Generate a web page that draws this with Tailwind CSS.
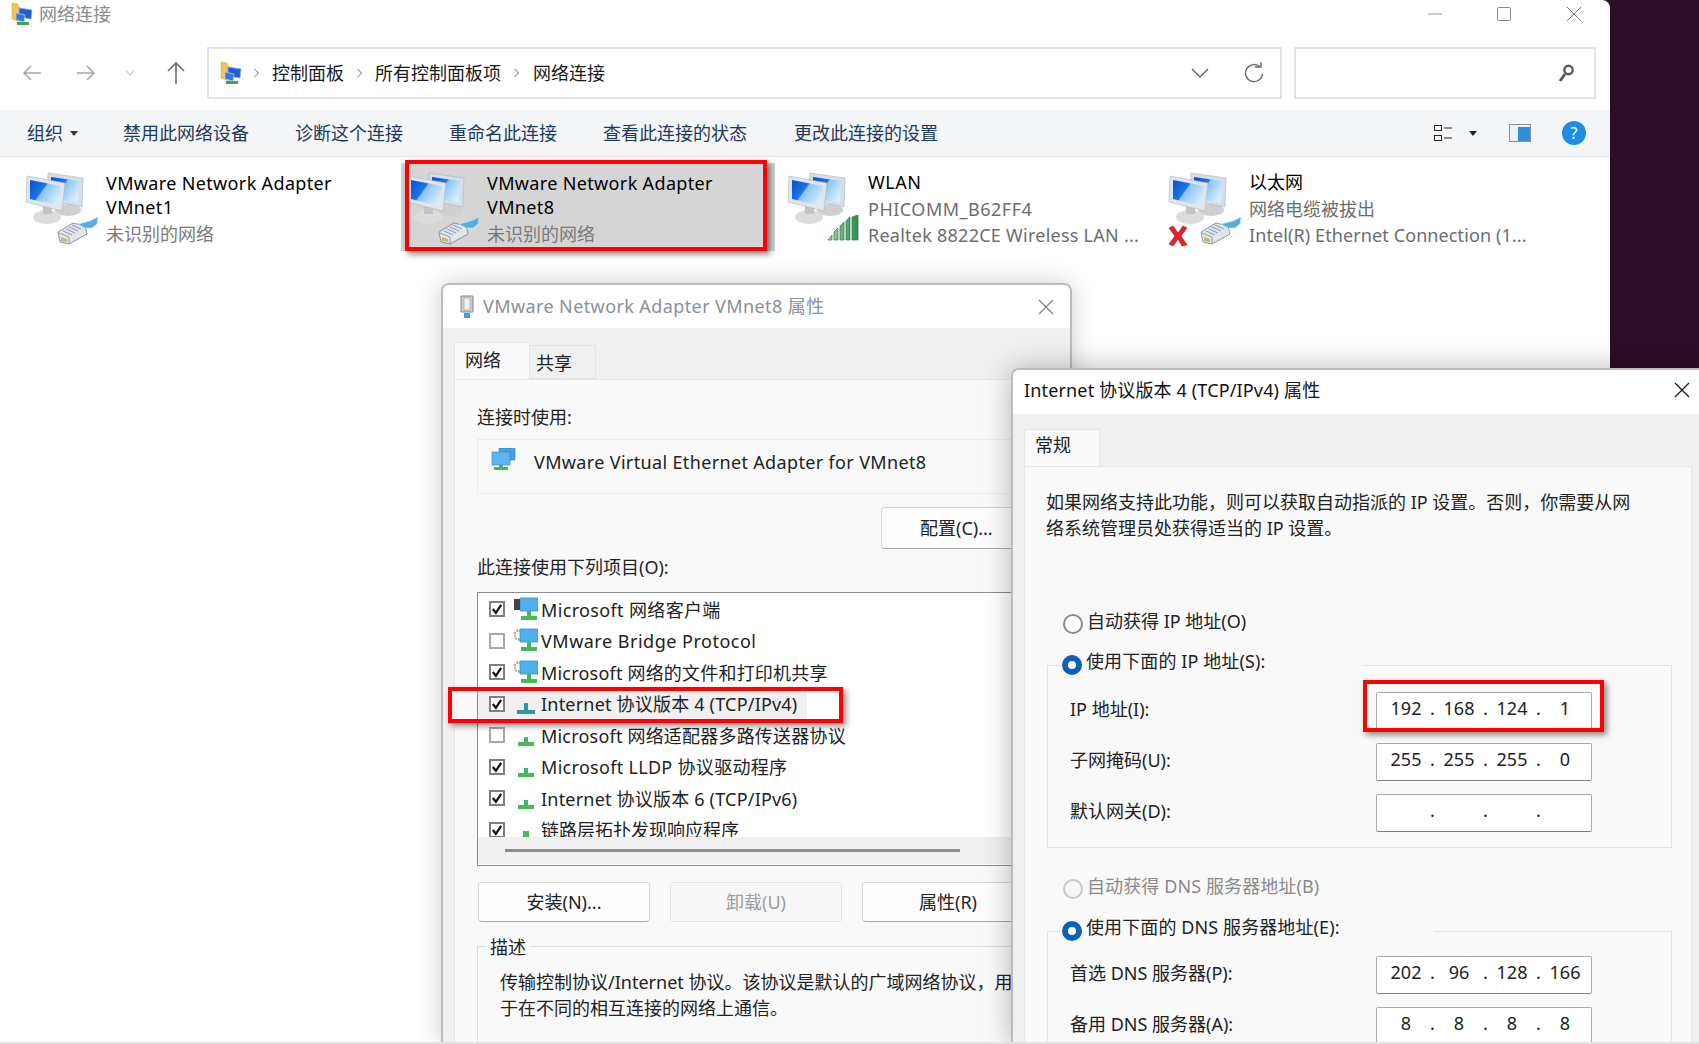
<!DOCTYPE html>
<html lang="zh-CN">

<head>
    <meta charset="UTF-8">
    <title>网络连接</title>
    <script src="https://cdn.jsdelivr.net/npm/@tailwindcss/browser@4"></script>
</head>

<body class="bg-[#2d0c26]">

    <!-- shared icons -->
    <svg width="0" height="0" class="absolute">
        <defs>
            <linearGradient id="screen" x1="0" y1="0" x2="1" y2="0.6">
                <stop offset="0" stop-color="#0a4fd0" />
                <stop offset="0.45" stop-color="#1a76e8" />
                <stop offset="0.5" stop-color="#8cc4f4" />
                <stop offset="1" stop-color="#d4ecfb" />
            </linearGradient>
            <linearGradient id="bars" x1="0" y1="0" x2="1" y2="0">
                <stop offset="0" stop-color="#a9d4b4" />
                <stop offset="1" stop-color="#2f8a4e" />
            </linearGradient>
            <symbol id="pc" viewBox="15 12 70 73">
                <ellipse cx="58" cy="50" rx="13" ry="6" fill="#cfcfcf" />
                <path d="M38 13 L73 18 L72 47 L37 40 Z" fill="#d5dde6" stroke="#a9b3bd" stroke-width="0.6" />
                <path d="M41 17 L69 21 L68 43 L41 38 Z" fill="url(#screen)" />
                <ellipse cx="37" cy="57" rx="14" ry="7" fill="#dcdcdc" />
                <path d="M33 46 L42 48 L42 54 L33 54 Z" fill="#c2c2c2" />
                <path d="M17 16 L55 23 L52 51 L16 42 Z" fill="#e1e6ec" stroke="#a9b3bd" stroke-width="0.6" />
                <path d="M20 20 L51 26 L49 46 L20 39 Z" fill="url(#screen)" />
            </symbol>
            <symbol id="plug" viewBox="0 0 44 28">
                <path d="M2 15 L17 6 L29 9 L31 17 L13 27 L4 25 Z" fill="#dfe6ec" stroke="#7f8c99" stroke-width="0.9" />
                <path d="M3 16 L13 20 L13 27" fill="none" stroke="#7f8c99" stroke-width="0.8" />
                <path d="M7 14 L16 18 M10 12 L19 16 M13 10 L22 14 M16 8 L25 12" stroke="#97a6b4" stroke-width="1.1" fill="none" />
                <path d="M5 20 L11 22 L11 25 L5 24 Z" fill="#c9b765" />
                <path d="M22 7 L34 4 L42 0 L41 7 L36 11 L29 11 Z" fill="#55ade4" stroke="#cfe6f5" stroke-width="0.6" />
            </symbol>
            <symbol id="folder" viewBox="0 0 22 24">
                <path d="M1 1 L7 2 L8 5 L9 5 L9 20 L1 17 Z" fill="#ecc65c" stroke="#c9a23a" stroke-width="0.5" />
                <path d="M8 6 L21 8 L20 17 L8 15 Z" fill="#1d5fd6" stroke="#8ea6c4" stroke-width="0.8" />
                <path d="M5 11 L14 13 L13 20 L5 18 Z" fill="#2f78e0" stroke="#b8c4d0" stroke-width="0.8" />
                <path d="M6 20 L18 20 L18 23 L6 23 Z" fill="#3aa55a" />
            </symbol>
            <symbol id="net" viewBox="0 0 24 24">
                <path d="M10 14 h4 v5 h6 v4 h-16 v-4 h6 z" fill="#44b95c" />
            </symbol>
            <symbol id="net-teal" viewBox="0 0 24 24">
                <path d="M10 12 h4 v7 h7 v4 h-18 v-4 h7 z" fill="#2f9a96" />
            </symbol>
            <symbol id="client" viewBox="0 0 24 24">
                <path d="M6 1 H24 V14 H6 Z" fill="#4fb0ef" stroke="#3b8fc8" stroke-width="0.8" />
                <path d="M13 14 h4 v5 h6 v4 h-16 v-4 h6 z" fill="#44b95c" />
            </symbol>
            <symbol id="gear" viewBox="0 0 24 24">
                <circle cx="5" cy="7" r="4.5" fill="none" stroke="#a8a8a8" stroke-width="2.4" stroke-dasharray="2 1" />
            </symbol>
            <symbol id="check" viewBox="0 0 16 16">
                <path d="M2.5 8 L6.5 13 L13.5 2.5" fill="none" stroke="#111" stroke-width="3" />
            </symbol>
        </defs>
    </svg>

    <div class="relative w-[1699px] h-[1044px] overflow-hidden font-['Noto_Sans','Noto_Sans_CJK_SC',sans-serif]">

        <!-- explorer window -->
        <div class="flex flex-col w-[1610px] h-[1044px] bg-white rounded-tr-lg">
            <div class="flex items-center justify-between h-[28px] mb-[19px] pl-[11px]">
                <div class="flex items-center gap-[6px] text-[18px] text-[#8b8b8b]">
                    <svg width="22" height="24"><use href="#folder" /></svg>
                    <span>网络连接</span>
                </div>
                <div class="flex items-center gap-[55px] pr-[28px]">
                    <svg width="14" height="14" viewBox="0 0 14 14"><path d="M0 7 H14" stroke="#9a9a9a" /></svg>
                    <svg width="14" height="14" viewBox="0 0 14 14"><rect x="0.5" y="0.5" width="13" height="13" rx="1.5" fill="none" stroke="#8a8a8a" /></svg>
                    <svg width="16" height="16" viewBox="0 0 16 16"><path d="M1 1 L15 15 M15 1 L1 15" stroke="#7a7a7a" /></svg>
                </div>
            </div>

            <div class="flex items-center h-[52px] mb-[11px]">
                <div class="flex items-center w-[207px] pl-[22px]">
                    <svg width="20" height="20" viewBox="0 0 20 20" fill="none" stroke="#a6a6a6" stroke-width="1.5"><path d="M19 10 H2 M9 3 L2 10 L9 17" /></svg>
                    <svg class="ml-[34px]" width="20" height="20" viewBox="0 0 20 20" fill="none" stroke="#a6a6a6" stroke-width="1.5"><path d="M1 10 H18 M11 3 L18 10 L11 17" /></svg>
                    <svg class="ml-[29px]" width="10" height="8" viewBox="0 0 10 8" fill="none" stroke="#b5b5b5"><path d="M1 1.5 L5 6 L9 1.5" /></svg>
                    <svg class="ml-[31px]" width="20" height="24" viewBox="0 0 20 24" fill="none" stroke="#6e6e6e" stroke-width="1.6"><path d="M10 23 V2 M2 10 L10 2 L18 10" /></svg>
                </div>
                <div class="flex items-center w-[1075px] h-full pl-[11px] pr-[16px] border-2 border-[#e3e3e3] text-[18px] text-[#1a1a1a]">
                    <svg width="22" height="24"><use href="#folder" /></svg>
                    <svg class="ml-[11px]" width="7" height="10" viewBox="0 0 7 10" fill="none" stroke="#666"><path d="M1.5 1 L5.5 5 L1.5 9" /></svg>
                    <span class="ml-[12px]">控制面板</span>
                    <svg class="ml-[12px]" width="7" height="10" viewBox="0 0 7 10" fill="none" stroke="#666"><path d="M1.5 1 L5.5 5 L1.5 9" /></svg>
                    <span class="ml-[12px]">所有控制面板项</span>
                    <svg class="ml-[12px]" width="7" height="10" viewBox="0 0 7 10" fill="none" stroke="#666"><path d="M1.5 1 L5.5 5 L1.5 9" /></svg>
                    <span class="ml-[13px]">网络连接</span>
                    <svg class="ml-auto" width="18" height="10" viewBox="0 0 18 10" fill="none" stroke="#555" stroke-width="1.2"><path d="M1 1 L9 9 L17 1" /></svg>
                    <svg class="ml-[35px]" width="20" height="22" viewBox="0 0 20 22" fill="none" stroke="#6e6e6e" stroke-width="1.4"><path d="M16 5 A8.5 8.5 0 1 0 18.5 12" /><path d="M11 5 H17 V0" /></svg>
                </div>
                <div class="flex items-center justify-end w-[302px] h-full ml-[12px] pr-[19px] border-2 border-[#e3e3e3]">
                    <svg width="18" height="20" viewBox="0 0 18 20" fill="none" stroke="#5a5a5a"><circle cx="11.5" cy="7" r="4.2" stroke-width="2.4" /><path d="M8 11 L3 18" stroke-width="3" /></svg>
                </div>
            </div>

            <div class="flex items-center h-[47px] pl-[27px] pr-[24px] bg-[#f3f5f7] border-b border-[#e4e6e8] text-[18px] text-[#1e395b]">
                <span>组织</span>
                <svg class="ml-[7px] mr-[45px]" width="8" height="5" viewBox="0 0 8 5"><path d="M0 0 H8 L4 5 Z" fill="#333" /></svg>
                <span class="mr-[46px]">禁用此网络设备</span>
                <span class="mr-[46px]">诊断这个连接</span>
                <span class="mr-[46px]">重命名此连接</span>
                <span class="mr-[47px]">查看此连接的状态</span>
                <span>更改此连接的设置</span>
                <svg class="ml-auto" width="20" height="20" viewBox="0 0 20 20" fill="none" stroke="#222"><rect x="1.5" y="2.5" width="7" height="5" /><rect x="1.5" y="12.5" width="7" height="5" /><path d="M11 5 H19 M11 15 H19" /></svg>
                <svg class="ml-[16px]" width="8" height="5" viewBox="0 0 8 5"><path d="M0 0 H8 L4 5 Z" fill="#223" /></svg>
                <svg class="ml-[32px]" width="22" height="18" viewBox="0 0 22 18"><rect x="0.5" y="0.5" width="21" height="17" fill="#eef2f6" stroke="#8a8f96" /><rect x="9" y="3" width="12" height="14" fill="#2f8fd8" /></svg>
                <div class="ml-[31px] flex items-center justify-center w-[24px] h-[24px] rounded-full bg-[#1a8fe3] text-white text-[16px]">?</div>
            </div>

            <div class="grid grid-cols-[repeat(4,381px)] mt-[6px] pl-[20px] text-[18px]">
                <div class="relative flex w-[374px] h-[88px] pl-[5px]">
                    <div class="relative w-[81px] shrink-0">
                        <svg class="absolute left-0 top-[9px]" width="70" height="73"><use href="#pc" /></svg>
                        <svg class="absolute left-[31px] top-[54px]" width="44" height="28"><use href="#plug" /></svg>
                    </div>
                    <div class="pt-[8px] leading-[24px] text-black">
                        <div class="tracking-[0.35px]">VMware Network Adapter</div>
                        <div class="tracking-[0.35px]">VMnet1</div>
                        <div class="mt-[3px] text-[#7a7a7a]">未识别的网络</div>
                    </div>
                </div>
                <div class="relative flex w-[374px] h-[88px] pl-[5px] bg-[#d5d5d5]">
                    <div class="relative w-[81px] shrink-0">
                        <svg class="absolute left-0 top-[9px]" width="70" height="73"><use href="#pc" /></svg>
                        <svg class="absolute left-[31px] top-[54px]" width="44" height="28"><use href="#plug" /></svg>
                    </div>
                    <div class="pt-[8px] leading-[24px] text-black">
                        <div class="tracking-[0.35px]">VMware Network Adapter</div>
                        <div class="tracking-[0.35px]">VMnet8</div>
                        <div class="mt-[3px] text-[#7a7a7a]">未识别的网络</div>
                    </div>
                    <div class="absolute left-[4px] top-[-3px] w-[362px] h-[91px] border-4 border-[#f00] shadow-[3px_3px_6px_rgba(0,0,0,0.5)]"></div>
                </div>
                <div class="relative flex w-[374px] h-[88px] pl-[5px]">
                    <div class="relative w-[81px] shrink-0">
                        <svg class="absolute left-0 top-[9px]" width="70" height="73"><use href="#pc" /></svg>
                        <svg class="absolute left-[40px] top-[52px]" width="32" height="26" viewBox="0 0 32 26"><path d="M1 25 L5 20 V25 Z M7 25 V17 L11 13 V25 Z M13 25 V11 L17 7 V25 Z M19 25 V6 L23 2 V25 Z M25 25 V2 L31 0 V25 Z" fill="url(#bars)" stroke="#2f7a46" stroke-width="0.7" /></svg>
                    </div>
                    <div class="pt-[6px] leading-[26px] text-black">
                        <div class="mb-[1px] tracking-[0.5px]">WLAN</div>
                        <div class="text-[#6d6d6d] tracking-[0.5px]">PHICOMM_B62FF4</div>
                        <div class="text-[#6d6d6d] tracking-[0.25px]">Realtek 8822CE Wireless LAN ...</div>
                    </div>
                </div>
                <div class="relative flex w-[374px] h-[88px] pl-[5px]">
                    <div class="relative w-[81px] shrink-0">
                        <svg class="absolute left-0 top-[9px]" width="70" height="73"><use href="#pc" /></svg>
                        <svg class="absolute left-[31px] top-[54px]" width="44" height="28"><use href="#plug" /></svg>
                        <svg class="absolute left-[-1px] top-[62px]" width="22" height="22" viewBox="0 0 22 22"><path d="M2 3 L6 1 L11 8 L16 1 L20 3 L14 11 L20 20 L15 21 L11 14 L6 21 L2 19 L8 11 Z" fill="#e0242a" stroke="#a81418" stroke-width="0.6" /></svg>
                    </div>
                    <div class="pt-[6px] leading-[26px] text-black">
                        <div class="mb-[1px]">以太网</div>
                        <div class="text-[#6d6d6d]">网络电缆被拔出</div>
                        <div class="text-[#6d6d6d] tracking-[0.1px]">Intel(R) Ethernet Connection (1...</div>
                    </div>
                </div>
            </div>
        </div>

        <!-- adapter properties dialog -->
        <div class="absolute left-[441px] top-[283px] flex flex-col w-[631px] h-[761px] rounded-t-lg border-2 border-b-0 border-[#bcbcbc] bg-[#f0f0f0] shadow-[0_0_24px_rgba(0,0,0,0.2)] overflow-hidden">
            <div class="flex items-center h-[43px] shrink-0 pl-[16px] pr-[16px] bg-white text-[18px] text-[#8a9098]">
                <svg width="16" height="24" viewBox="0 0 16 24"><path d="M2 1 H14 V17 H2 Z" fill="#c9cdd2" stroke="#7d858e" /><path d="M5 3 H11 V15 H5 Z" fill="#eef0f2" stroke="#9aa2aa" stroke-width="0.6" /><path d="M5 18 H11 V23 H5 Z" fill="#3aa0d8" /></svg>
                <span class="ml-[8px] tracking-[0.4px]">VMware Network Adapter VMnet8 属性</span>
                <svg class="ml-auto" width="16" height="16" viewBox="0 0 16 16"><path d="M1 1 L15 15 M15 1 L1 15" stroke="#808080" stroke-width="1.2" /></svg>
            </div>
            <div class="flex items-end h-[51px] shrink-0 pl-[11px] text-[18px] text-[#222]">
                <div class="flex items-start w-[76px] h-[37px] pt-[4px] pl-[10px] bg-[#f9f9f9] border border-b-0 border-[#e6e6e6]">网络</div>
                <div class="flex items-center w-[66px] h-[34px] pt-[2px] pl-[6px] bg-[#f0f0f0] border border-l-0 border-[#e2e2e2]">共享</div>
            </div>
            <div class="flex-1 ml-[11px] w-[606px] pl-[22px] bg-[#f9f9f9] border-t border-l border-[#e6e6e6] text-[18px] text-[#222]">
                <div class="h-[24px] mt-[25px] leading-[24px]">连接时使用:</div>
                <div class="flex h-[55px] mt-[10px] pl-[13px] pt-[8px] border border-[#ececec]">
                    <svg width="25" height="24" viewBox="0 0 25 24"><rect x="8" y="0" width="16" height="12" fill="#4a9fe0" stroke="#2f7fc0" stroke-width="0.6" /><rect x="1" y="4" width="18" height="13" fill="#5bb5ef" stroke="#2f7fc0" stroke-width="0.6" /><path d="M8 17 h4 v2 h5 v3 h-14 v-3 h5 z" fill="#44b95c" /></svg>
                    <span class="ml-[18px] leading-[28px] tracking-[0.35px]">VMware Virtual Ethernet Adapter for VMnet8</span>
                </div>
                <div class="flex justify-start h-[42px] mt-[13px] ml-[404px]">
                    <div class="flex items-center w-[160px] pl-[38px] bg-[#fdfdfd] border border-[#d4d4d4] border-b-[#a8a8a8] rounded-[4px]">配置(C)...</div>
                </div>
                <div class="h-[24px] mt-[6px] leading-[24px]">此连接使用下列项目(O):</div>
                <div class="relative w-[570px] h-[274px] mt-[13px] bg-white border-[1.5px] border-[#8c8c8c]">
                    <div class="h-[244px] overflow-hidden">
                        <div class="flex items-center h-[31.5px] pl-[11px]">
                            <div class="w-[16px] h-[16px] mt-[1px] bg-white border-2 border-[#7f7f7f]"><svg width="12" height="12"><use href="#check" /></svg></div>
                            <svg class="ml-[9px]" width="24" height="24"><use href="#client" /><rect x="0" y="2" width="6" height="11" fill="#444" /></svg>
                            <span class="ml-[3px] pt-[3px] tracking-[0.35px]">Microsoft 网络客户端</span>
                        </div>
                        <div class="flex items-center h-[31.5px] pl-[11px]">
                            <div class="w-[16px] h-[16px] mt-[1px] bg-white border-2 border-[#a8a8a8]"></div>
                            <svg class="ml-[9px]" width="24" height="24"><use href="#gear" /><use href="#client" /></svg>
                            <span class="ml-[3px] pt-[3px] tracking-[0.5px]">VMware Bridge Protocol</span>
                        </div>
                        <div class="flex items-center h-[31.5px] pl-[11px]">
                            <div class="w-[16px] h-[16px] mt-[1px] bg-white border-2 border-[#7f7f7f]"><svg width="12" height="12"><use href="#check" /></svg></div>
                            <svg class="ml-[9px]" width="24" height="24"><use href="#gear" /><use href="#client" /></svg>
                            <span class="ml-[3px] pt-[3px] tracking-[0.2px]">Microsoft 网络的文件和打印机共享</span>
                        </div>
                        <div class="flex items-center h-[31.5px] pl-[11px] w-[329px] bg-[#f0f0f0]">
                            <div class="w-[16px] h-[16px] mt-[1px] bg-white border-2 border-[#7f7f7f]"><svg width="12" height="12"><use href="#check" /></svg></div>
                            <svg class="ml-[9px]" width="24" height="24"><use href="#net-teal" /></svg>
                            <span class="ml-[3px] pt-[3px] tracking-[0.2px]">Internet 协议版本 4 (TCP/IPv4)</span>
                        </div>
                        <div class="flex items-center h-[31.5px] pl-[11px]">
                            <div class="w-[16px] h-[16px] mt-[1px] bg-white border-2 border-[#a8a8a8]"></div>
                            <svg class="ml-[9px]" width="24" height="24"><use href="#net" /></svg>
                            <span class="ml-[3px] pt-[3px] tracking-[0.2px]">Microsoft 网络适配器多路传送器协议</span>
                        </div>
                        <div class="flex items-center h-[31.5px] pl-[11px]">
                            <div class="w-[16px] h-[16px] mt-[1px] bg-white border-2 border-[#7f7f7f]"><svg width="12" height="12"><use href="#check" /></svg></div>
                            <svg class="ml-[9px]" width="24" height="24"><use href="#net" /></svg>
                            <span class="ml-[3px] pt-[3px] tracking-[0.3px]">Microsoft LLDP 协议驱动程序</span>
                        </div>
                        <div class="flex items-center h-[31.5px] pl-[11px]">
                            <div class="w-[16px] h-[16px] mt-[1px] bg-white border-2 border-[#7f7f7f]"><svg width="12" height="12"><use href="#check" /></svg></div>
                            <svg class="ml-[9px]" width="24" height="24"><use href="#net" /></svg>
                            <span class="ml-[3px] pt-[3px] tracking-[0.2px]">Internet 协议版本 6 (TCP/IPv6)</span>
                        </div>
                        <div class="flex items-center h-[31.5px] pl-[11px]">
                            <div class="w-[16px] h-[16px] mt-[1px] bg-white border-2 border-[#7f7f7f]"><svg width="12" height="12"><use href="#check" /></svg></div>
                            <svg class="ml-[9px]" width="24" height="24" viewBox="0 0 24 24"><rect x="9" y="14" width="6" height="6" fill="#44b95c" /></svg>
                            <span class="ml-[3px] pt-[3px]">链路层拓扑发现响应程序</span>
                        </div>
                    </div>
                    <div class="flex items-center h-[27px] pl-[27px] bg-[#f0f0f0]">
                        <div class="w-[455px] h-[3px] bg-[#8c8c8c]"></div>
                    </div>
                </div>
                <div class="flex gap-[20px] mt-[16px] ml-[1px]">
                    <div class="flex items-center justify-center w-[172px] h-[40px] bg-[#fdfdfd] border border-[#d4d4d4] border-b-[#a8a8a8] rounded-[4px]">安装(N)...</div>
                    <div class="flex items-center justify-center w-[172px] h-[40px] bg-[#f7f7f7] border border-[#e2e2e2] rounded-[4px] text-[#9d9d9d]">卸载(U)</div>
                    <div class="flex items-center justify-center w-[172px] h-[40px] bg-[#fdfdfd] border border-[#d4d4d4] border-b-[#a8a8a8] rounded-[4px]">属性(R)</div>
                </div>
                <div class="h-[120px] mt-[24px] border-t border-l border-[#dcdcdc]">
                    <div class="w-fit h-[24px] -mt-[12px] ml-[8px] px-[4px] bg-[#f9f9f9] leading-[24px]">描述</div>
                    <div class="mt-[10px] pl-[22px] leading-[26px] whitespace-nowrap">传输控制协议/Internet 协议。该协议是默认的广域网络协议，用<br>于在不同的相互连接的网络上通信。</div>
                </div>
            </div>
        </div>

        <!-- IPv4 properties dialog -->
        <div class="absolute left-[1011px] top-[368px] flex flex-col w-[700px] h-[676px] rounded-tl-lg bg-[#f0f0f0] border-t-2 border-l-2 border-[#bcbcbc] shadow-[0_0_28px_rgba(0,0,0,0.28)] overflow-hidden">
            <div class="flex items-center h-[44px] shrink-0 pl-[11px] pb-[4px] bg-white text-[18px] text-[#111]">
                <span class="tracking-[0.15px]">Internet 协议版本 4 (TCP/IPv4) 属性</span>
                <svg class="absolute left-[661px] top-[12px]" width="16" height="16" viewBox="0 0 16 16"><path d="M1 1 L15 15 M15 1 L1 15" stroke="#111" stroke-width="1.2" /></svg>
            </div>
            <div class="flex items-end h-[52px] shrink-0 pl-[11px] text-[18px] text-[#222]">
                <div class="w-[76px] h-[37px] pt-[2px] pl-[10px] bg-[#f9f9f9] border border-b-0 border-[#e6e6e6]">常规</div>
            </div>
            <div class="flex-1 ml-[11px] w-[668px] bg-[#f9f9f9] border-t border-l border-r border-[#e6e6e6] text-[18px] text-[#222]">
                <div class="pt-[22px] pl-[21px] leading-[26px] whitespace-nowrap">如果网络支持此功能，则可以获取自动指派的 IP 设置。否则，你需要从网<br>络系统管理员处获得适当的 IP 设置。</div>
                <div class="flex items-center h-[26px] mt-[67px] ml-[38px]">
                    <div class="w-[20px] h-[20px] mt-[5px] rounded-full border-2 border-[#8a8a8a] bg-white"></div>
                    <span class="ml-[4px]">自动获得 IP 地址(O)</span>
                </div>
                <div class="w-[625px] h-[183px] mt-[31px] ml-[22px] border border-[#e2e2e2]">
                    <div class="flex items-center w-[301px] h-[26px] -mt-[18px] ml-[14px] bg-[#f9f9f9]">
                        <div class="w-[20px] h-[20px] mt-[7px] rounded-full border-[6px] border-[#0a62b8] bg-white"></div>
                        <span class="ml-[4px] tracking-[0.1px]">使用下面的 IP 地址(S):</span>
                    </div>
                    <div class="flex items-center h-[38px] mt-[18px] pl-[22px]">
                        <span class="w-[306px] mb-[4px]">IP 地址(I):</span>
                        <div class="grid grid-cols-[38px_15px_38px_15px_38px_15px_38px] items-center w-[216px] h-full pl-[10px] pb-[6px] bg-white border border-[#aaaaaa] border-b-[#7d7d7d] rounded-[2px] text-center">
                            <span>192</span><span>.</span><span>168</span><span>.</span><span>124</span><span>.</span><span>1</span>
                        </div>
                    </div>
                    <div class="flex items-center h-[38px] mt-[13px] pl-[22px]">
                        <span class="w-[306px] mb-[4px]">子网掩码(U):</span>
                        <div class="grid grid-cols-[38px_15px_38px_15px_38px_15px_38px] items-center w-[216px] h-full pl-[10px] pb-[6px] bg-white border border-[#aaaaaa] border-b-[#7d7d7d] rounded-[2px] text-center">
                            <span>255</span><span>.</span><span>255</span><span>.</span><span>255</span><span>.</span><span>0</span>
                        </div>
                    </div>
                    <div class="flex items-center h-[38px] mt-[13px] pl-[22px]">
                        <span class="w-[306px] mb-[4px]">默认网关(D):</span>
                        <div class="grid grid-cols-[38px_15px_38px_15px_38px_15px_38px] items-center w-[216px] h-full pl-[10px] pb-[6px] bg-white border border-[#aaaaaa] border-b-[#7d7d7d] rounded-[2px] text-center">
                            <span></span><span>.</span><span></span><span>.</span><span></span><span>.</span><span></span>
                        </div>
                    </div>
                </div>
                <div class="flex items-center h-[26px] mt-[25px] ml-[38px] text-[#8a8a8a]">
                    <div class="w-[20px] h-[20px] mt-[5px] rounded-full border-2 border-[#c8c8c8] bg-[#f6f6f6]"></div>
                    <span class="ml-[4px] tracking-[0.1px]">自动获得 DNS 服务器地址(B)</span>
                </div>
                <div class="w-[625px] h-[200px] mt-[32px] ml-[22px] border border-[#e2e2e2]">
                    <div class="flex items-center w-[372px] h-[26px] -mt-[18px] ml-[14px] bg-[#f9f9f9]">
                        <div class="w-[20px] h-[20px] mt-[7px] rounded-full border-[6px] border-[#0a62b8] bg-white"></div>
                        <span class="ml-[4px] tracking-[0.1px]">使用下面的 DNS 服务器地址(E):</span>
                    </div>
                    <div class="flex items-center h-[38px] mt-[16px] pl-[22px]">
                        <span class="w-[306px] mb-[4px]">首选 DNS 服务器(P):</span>
                        <div class="grid grid-cols-[38px_15px_38px_15px_38px_15px_38px] items-center w-[216px] h-full pl-[10px] pb-[6px] bg-white border border-[#aaaaaa] border-b-[#7d7d7d] rounded-[2px] text-center">
                            <span>202</span><span>.</span><span>96</span><span>.</span><span>128</span><span>.</span><span>166</span>
                        </div>
                    </div>
                    <div class="flex items-center h-[38px] mt-[13px] pl-[22px]">
                        <span class="w-[306px] mb-[4px]">备用 DNS 服务器(A):</span>
                        <div class="grid grid-cols-[38px_15px_38px_15px_38px_15px_38px] items-center w-[216px] h-full pl-[10px] pb-[6px] bg-white border border-[#aaaaaa] border-b-[#7d7d7d] rounded-[2px] text-center">
                            <span>8</span><span>.</span><span>8</span><span>.</span><span>8</span><span>.</span><span>8</span>
                        </div>
                    </div>
                </div>
            </div>
        </div>

        <!-- red callouts -->
        <div class="absolute left-[448px] top-[687px] w-[395px] h-[36px] border-4 border-[#f00] shadow-[3px_3px_6px_rgba(0,0,0,0.45)]"></div>
        <div class="absolute left-[1363px] top-[680px] w-[241px] h-[52px] border-4 border-[#f00] shadow-[3px_3px_6px_rgba(0,0,0,0.45)]"></div>

        <!-- bottom strip -->
        <div class="absolute left-0 bottom-0 w-full h-[2px] bg-[#e2e2e2]"></div>
    </div>

</body>

</html>
